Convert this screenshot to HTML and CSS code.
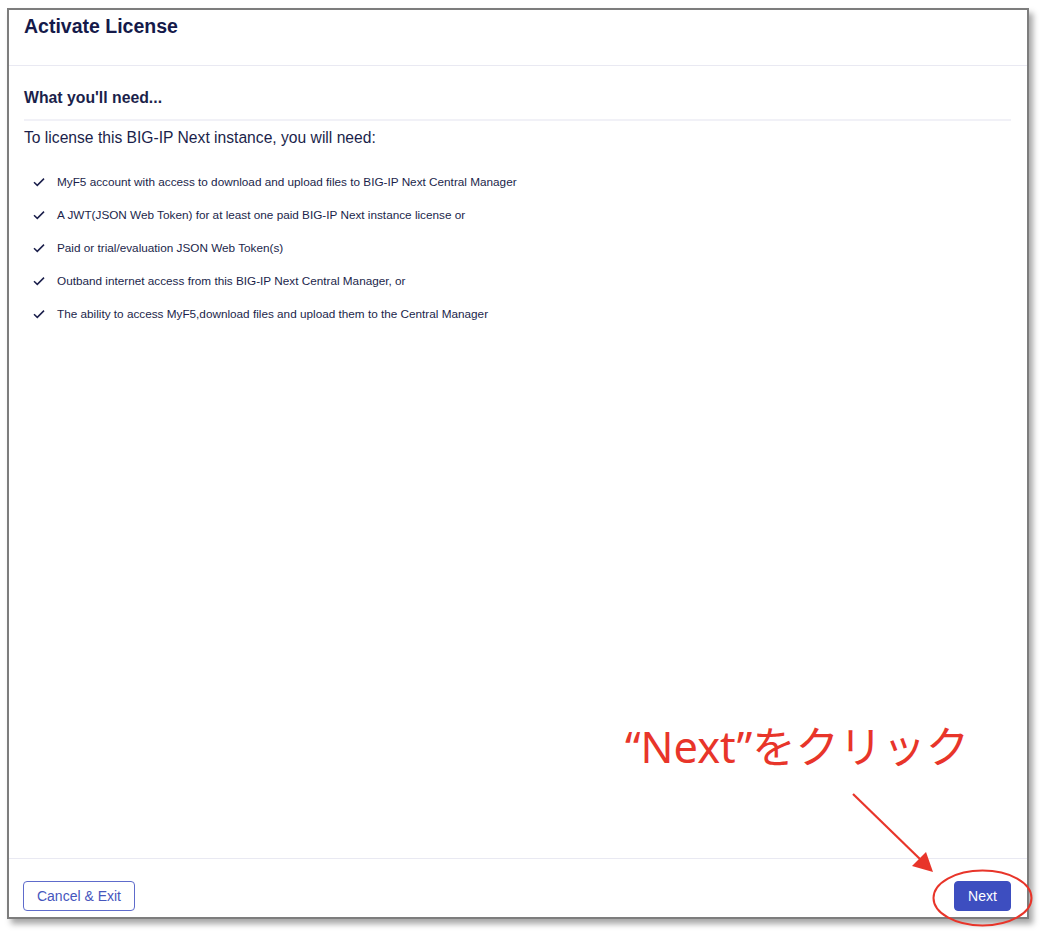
FILE: index.html
```html
<!DOCTYPE html>
<html lang="en">
<head>
<meta charset="utf-8">
<title>Activate License</title>
<link rel="stylesheet" href="styles.css">
</head>
<body>
<div class="frame">
  <header class="head">
    <h1 class="title">Activate License</h1>
  </header>
  <main class="main">
    <h2 class="subtitle">What you'll need...</h2>
    <p class="lead">To license this BIG-IP Next instance, you will need:</p>
    <ul class="reqs">
      <li class="req"><svg class="check" viewBox="0 0 12 10" width="12" height="10"><path d="M1 5.2 L4.3 8.4 L11 1.6" fill="none" stroke="#1b1f4b" stroke-width="1.5"/></svg><span>MyF5 account with access to download and upload files to BIG-IP Next Central Manager</span></li>
      <li class="req"><svg class="check" viewBox="0 0 12 10" width="12" height="10"><path d="M1 5.2 L4.3 8.4 L11 1.6" fill="none" stroke="#1b1f4b" stroke-width="1.5"/></svg><span>A JWT(JSON Web Token) for at least one paid BIG-IP Next instance license or</span></li>
      <li class="req"><svg class="check" viewBox="0 0 12 10" width="12" height="10"><path d="M1 5.2 L4.3 8.4 L11 1.6" fill="none" stroke="#1b1f4b" stroke-width="1.5"/></svg><span>Paid or trial/evaluation JSON Web Token(s)</span></li>
      <li class="req"><svg class="check" viewBox="0 0 12 10" width="12" height="10"><path d="M1 5.2 L4.3 8.4 L11 1.6" fill="none" stroke="#1b1f4b" stroke-width="1.5"/></svg><span>Outband internet access from this BIG-IP Next Central Manager, or</span></li>
      <li class="req"><svg class="check" viewBox="0 0 12 10" width="12" height="10"><path d="M1 5.2 L4.3 8.4 L11 1.6" fill="none" stroke="#1b1f4b" stroke-width="1.5"/></svg><span>The ability to access MyF5,download files and upload them to the Central Manager</span></li>
    </ul>
  </main>
  <footer class="foot">
    <button class="btn btn-outline">Cancel &amp; Exit</button>
    <button class="btn btn-primary">Next</button>
  </footer>
</div>

<div class="callout">“Next”をクリック</div>
<svg class="marks" width="1042" height="932" viewBox="0 0 1042 932">
  <line x1="853" y1="794" x2="922" y2="861" stroke="#e8352a" stroke-width="2.2"/>
  <polygon points="933,872 912,866 926,852" fill="#e8352a"/>
  <ellipse cx="982.5" cy="898" rx="49" ry="27.5" fill="none" stroke="#e8352a" stroke-width="2"/>
</svg>
</body>
</html>
```

FILE: styles.css
```css
html, body {
  margin: 0;
  padding: 0;
  background: #ffffff;
}

body {
  width: 1042px;
  height: 932px;
  position: relative;
  font-family: "Liberation Sans", Arial, sans-serif;
  color: #1b1f4b;
}

.frame {
  position: absolute;
  left: 7px;
  top: 8px;
  width: 1022px;
  height: 911px;
  box-sizing: border-box;
  border: 2px solid #7d7d7d;
  background: #fff;
  box-shadow: 4px 5px 6px rgba(0, 0, 0, 0.35);
  display: flex;
  flex-direction: column;
}

.head {
  height: 51px;
  border-bottom: 1px solid #e9e9f2;
  padding: 4px 15px 0;
  box-sizing: content-box;
  flex: none;
}

.title {
  margin: 0;
  font-size: 19.5px;
  line-height: 24px;
  font-weight: bold;
  color: #151a4a;
}

.main {
  flex: 1;
  padding: 0 16px 0 15px;
}

.subtitle {
  margin: 22px 0 0;
  padding-bottom: 11px;
  border-bottom: 2px solid #f1f1f7;
  font-size: 15.8px;
  line-height: 20px;
  font-weight: bold;
  color: #1b1f4b;
}

.lead {
  margin: 7px 0 0;
  font-size: 15.65px;
  line-height: 20px;
  color: #1b1f4b;
}

.reqs {
  list-style: none;
  margin: 17px 0 0;
  padding: 0 0 0 9px;
}

.req {
  height: 33px;
  display: flex;
  align-items: center;
  font-size: 11.75px;
  color: #1b1f4b;
}

.check {
  flex: none;
  margin-right: 12px;
}

.foot {
  flex: none;
  border-top: 1px solid #e9e9f2;
  padding: 22px 16px 6px 14px;
  display: flex;
  justify-content: space-between;
  align-items: center;
}

.btn {
  height: 30px;
  box-sizing: border-box;
  border-radius: 4px;
  font-family: "Liberation Sans", Arial, sans-serif;
  font-size: 14px;
  cursor: pointer;
}

.btn-outline {
  width: 112px;
  background: #fff;
  border: 1px solid #5e6bcb;
  color: #4656bd;
}

.btn-primary {
  width: 57px;
  background: #3d4ec0;
  border: 1px solid #3d4ec0;
  color: #fff;
}

.callout {
  position: absolute;
  left: 625px;
  top: 719px;
  font-family: "Noto Sans", "Noto Sans CJK JP", sans-serif;
  font-size: 43.4px;
  line-height: 56px;
  color: #e8352a;
  white-space: nowrap;
}

.marks {
  position: absolute;
  left: 0;
  top: 0;
  pointer-events: none;
}
```
